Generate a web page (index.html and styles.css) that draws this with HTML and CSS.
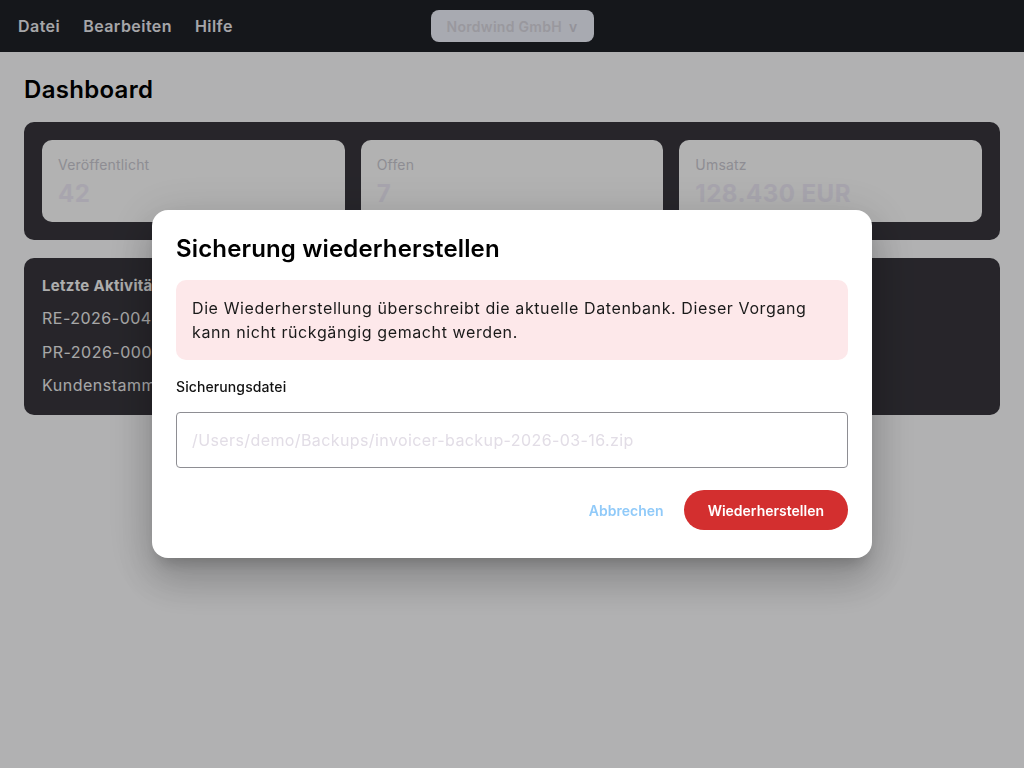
FILE: index.html
```html
<!DOCTYPE html>
<html lang="de">
<head>
<meta charset="utf-8">
<title>Dashboard</title>
<link rel="stylesheet" href="styles.css">
</head>
<body>
<header class="topbar">
  <nav class="menu">
    <span class="menu-item">Datei</span>
    <span class="menu-item">Bearbeiten</span>
    <span class="menu-item">Hilfe</span>
  </nav>
  <button class="company-select">Nordwind GmbH <span class="caret">v</span></button>
  <div class="topbar-spacer"></div>
</header>

<main class="page">
  <h1 class="page-title">Dashboard</h1>
  <section class="panel stats">
    <div class="stat">
      <div class="stat-label">Veröffentlicht</div>
      <div class="stat-value">42</div>
    </div>
    <div class="stat">
      <div class="stat-label">Offen</div>
      <div class="stat-value">7</div>
    </div>
    <div class="stat">
      <div class="stat-label">Umsatz</div>
      <div class="stat-value">128.430 EUR</div>
    </div>
  </section>
  <section class="panel activity">
    <div class="activity-title">Letzte Aktivitäten</div>
    <div class="activity-row">RE-2026-0042 veröffentlicht</div>
    <div class="activity-row">PR-2026-0007 erstellt</div>
    <div class="activity-row">Kundenstamm aktualisiert</div>
  </section>
</main>

<div class="overlay">
  <div class="dialog" role="dialog">
    <h2 class="dialog-title">Sicherung wiederherstellen</h2>
    <div class="alert">Die Wiederherstellung überschreibt die aktuelle Datenbank. Dieser Vorgang kann nicht rückgängig gemacht werden.</div>
    <label class="field-label">Sicherungsdatei</label>
    <input class="field-input" type="text" placeholder="/Users/demo/Backups/invoicer-backup-2026-03-16.zip">
    <div class="actions">
      <button class="btn-text">Abbrechen</button>
      <button class="btn-danger">Wiederherstellen</button>
    </div>
  </div>
</div>
</body>
</html>
```

FILE: styles.css
```css
* { box-sizing: border-box; }
html, body { margin: 0; padding: 0; }
body {
  font-family: Inter, "Noto Sans", "DejaVu Sans", sans-serif;
  background: #fefeff;
  color: #000;
  height: 768px;
  overflow: hidden;
}

.topbar {
  height: 52px;
  background: #1f2128;
  display: grid;
  grid-template-columns: 1fr auto 1fr;
  align-items: center;
  padding: 0 18px;
}
.menu { display: flex; gap: 23px; }
.menu-item {
  color: #eeeef2;
  font-size: 16px;
  font-weight: 600;
  letter-spacing: 0.45px;
}
.company-select {
  width: 163px;
  height: 32px;
  border: none;
  border-radius: 8px;
  background: #f1f4fe;
  color: #dcdae3;
  font-family: inherit;
  font-size: 14px;
  font-weight: 600;
  letter-spacing: 0.3px;
  text-align: left;
  padding: 0 16px;
  display: flex;
  align-items: center;
  justify-content: space-between;
}
.caret { font-weight: 600; color: #d4d2dc; }

.page { padding: 24px 24px; }
.page-title {
  margin: 0 0 18px;
  font-size: 24px;
  line-height: 28px;
  font-weight: 600;
  letter-spacing: 0.3px;
  color: #000;
}

.panel {
  background: #38363d;
  border-radius: 10px;
  padding: 18px;
}
.stats {
  display: grid;
  grid-template-columns: 1fr 1fr 1fr;
  gap: 16px;
  margin-bottom: 18px;
}
.stat {
  background: #ffffff;
  border-radius: 10px;
  height: 82px;
  padding: 16px;
}
.stat-label {
  font-size: 14px;
  line-height: 18px;
  color: #cccbd3;
  letter-spacing: 0.2px;
}
.stat-value {
  font-size: 24px;
  line-height: 40px;
  font-weight: 700;
  letter-spacing: 0.5px;
  color: #f1edf9;
}

.activity { padding: 18px 18px 19px; }
.activity-title {
  font-size: 15px;
  font-weight: 700;
  line-height: 20px;
  letter-spacing: 0.3px;
  color: #fafafa;
  margin-bottom: 11px;
}
.activity-row {
  font-size: 16px;
  line-height: 22px;
  color: #f0f0f0;
  margin-bottom: 11.5px;
  letter-spacing: 0.5px;
}
.activity-row:last-child { margin-bottom: 0; }

.overlay {
  position: fixed;
  inset: 0;
  background: rgba(0, 0, 0, 0.3);
  display: flex;
  align-items: center;
  justify-content: center;
}
.dialog {
  width: 720px;
  background: #fff;
  border-radius: 16px;
  padding: 24px 24px 28px;
  box-shadow: 0 11px 15px -7px rgba(0,0,0,0.2), 0 24px 38px 3px rgba(0,0,0,0.14), 0 9px 46px 8px rgba(0,0,0,0.12);
}
.dialog-title {
  margin: 0 0 16px;
  font-size: 24px;
  line-height: 30px;
  font-weight: 600;
  letter-spacing: 0.15px;
  color: #000;
}
.alert {
  background: #fde8ea;
  border-radius: 10px;
  padding: 16px;
  font-size: 16px;
  line-height: 24px;
  color: #1a1a1a;
  letter-spacing: 0.6px;
  margin-bottom: 17px;
}
.field-label {
  display: block;
  font-size: 14px;
  line-height: 20px;
  font-weight: 500;
  letter-spacing: 0.1px;
  color: #111;
  margin-bottom: 15px;
}
.field-input {
  display: block;
  width: 100%;
  height: 56px;
  border: 1px solid #8e8e93;
  border-radius: 4px;
  padding: 0 15px;
  font-family: inherit;
  font-size: 16px;
  letter-spacing: 0.4px;
  color: #111;
  outline: none;
}
.field-input::placeholder { color: #e2dde6; }

.actions {
  display: flex;
  justify-content: flex-end;
  align-items: center;
  gap: 20px;
  margin-top: 22px;
}
.btn-text {
  border: none;
  background: none;
  font-family: inherit;
  font-size: 14px;
  font-weight: 600;
  color: #90caf9;
  padding: 0;
}
.btn-danger {
  border: none;
  background: #d32f2f;
  color: #fff;
  font-family: inherit;
  font-size: 14px;
  font-weight: 600;
  height: 40px;
  border-radius: 20px;
  padding: 0 24px;
}
```
